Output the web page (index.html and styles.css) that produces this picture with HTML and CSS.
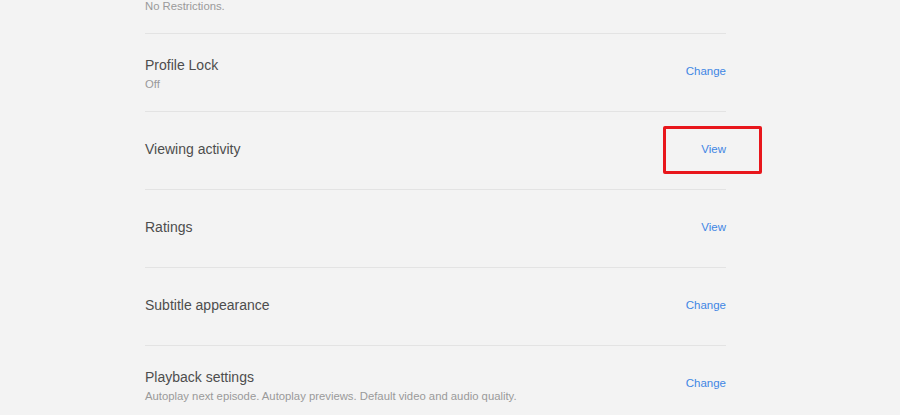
FILE: index.html
```html
<!DOCTYPE html>
<html lang="en">
<head>
<meta charset="utf-8">
<title>Profile settings</title>
<link rel="stylesheet" href="styles.css">
</head>
<body>
<main class="page">
  <ul class="list">
    <li class="row">
      <div class="info two">
        <div class="title">Viewing restrictions</div>
        <div class="sub">No Restrictions.</div>
      </div>
      <a class="link" href="#">Change</a>
    </li>
    <li class="row">
      <div class="info two">
        <div class="title">Profile Lock</div>
        <div class="sub">Off</div>
      </div>
      <a class="link" href="#">Change</a>
    </li>
    <li class="row">
      <div class="info one">
        <div class="title">Viewing activity</div>
      </div>
      <a class="link" href="#">View</a>
      <span class="highlight"></span>
    </li>
    <li class="row">
      <div class="info one">
        <div class="title">Ratings</div>
      </div>
      <a class="link" href="#">View</a>
    </li>
    <li class="row">
      <div class="info one">
        <div class="title">Subtitle appearance</div>
      </div>
      <a class="link" href="#">Change</a>
    </li>
    <li class="row">
      <div class="info two">
        <div class="title">Playback settings</div>
        <div class="sub">Autoplay next episode. Autoplay previews. Default video and audio quality.</div>
      </div>
      <a class="link" href="#">Change</a>
    </li>
  </ul>
</main>
</body>
</html>
```
FILE: styles.css
```css
html, body {
  margin: 0;
  padding: 0;
  background: #f3f3f3;
  overflow: hidden;
}
body {
  font-family: "Liberation Sans", Arial, sans-serif;
  -webkit-font-smoothing: antialiased;
}
.page {
  width: 581px;
  margin-left: 145px;
}
.list {
  list-style: none;
  margin: -44px 0 0 0;
  padding: 0;
}
.row {
  position: relative;
  box-sizing: border-box;
  height: 78px;
  border-bottom: 1px solid #e3e3e3;
  display: flex;
  align-items: center;
  justify-content: space-between;
}
.info.two {
  padding-top: 3px;
}
.info.one {
  margin-bottom: 4px;
}
.title {
  font-size: 14px;
  line-height: 18px;
  color: #4d4d4d;
}
.sub {
  margin-top: 1px;
  font-size: 11.3px;
  line-height: 18px;
  color: #9a9a9a;
}
.link {
  margin-bottom: 4px;
  font-size: 11.5px;
  color: #3f86e4;
  text-decoration: none;
}
.highlight {
  position: absolute;
  top: 14px;
  right: -36px;
  width: 99px;
  height: 48px;
  box-sizing: border-box;
  border: 3px solid #e8161b;
  border-radius: 2px;
}
```
